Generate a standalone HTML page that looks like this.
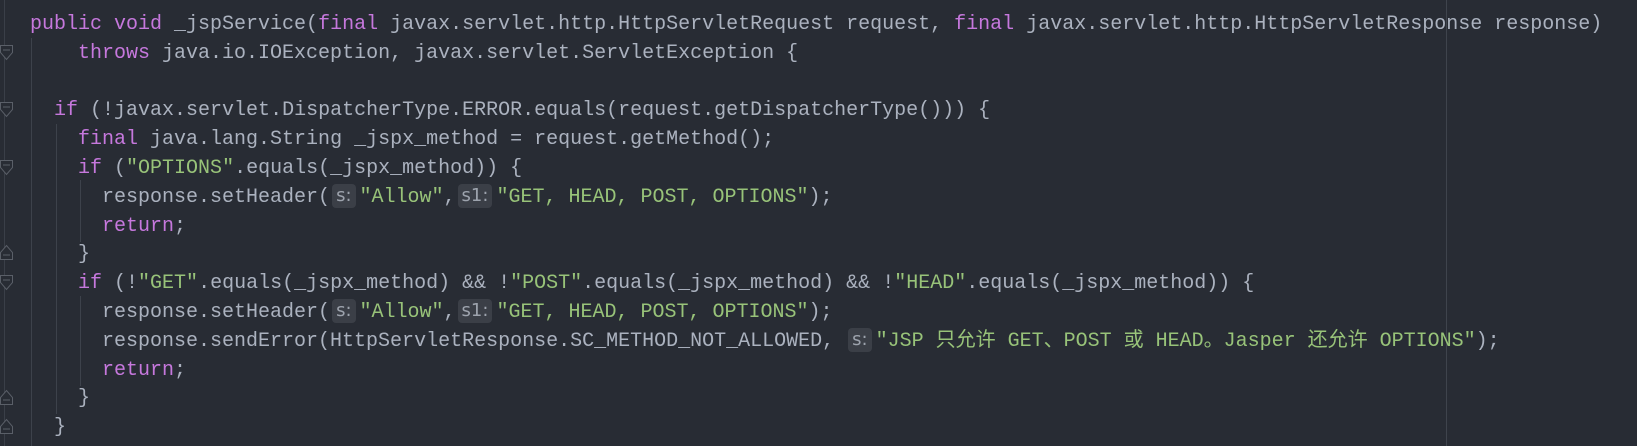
<!DOCTYPE html>
<html><head><meta charset="utf-8"><style>
html,body{margin:0;padding:0;background:#282c34;width:1637px;height:446px;overflow:hidden;position:relative}
.code{position:absolute;left:30px;top:11px;font-family:"Liberation Mono","Noto Sans CJK SC",monospace;font-size:20px;line-height:28.8px;color:#abb2bf;white-space:pre}
.k{color:#c678dd}.s{color:#98c379}
.h{display:inline-block;background:#3b3f47;color:#9da3ad;border-radius:4px;font-family:"DejaVu Sans",sans-serif;font-size:18px;line-height:24px;padding:0 4px;margin:0 4px 0 2px;vertical-align:1px}
.g{position:absolute;width:1px;background:#3d424b}
svg.f{position:absolute;left:0}
</style></head><body>
<div class="g" style="left:4px;top:0;height:446px;background:#3a3f48"></div>
<div class="g" style="left:31px;top:38px;height:408px"></div>
<div class="g" style="left:56px;top:124px;height:290px"></div>
<div class="g" style="left:80px;top:180px;height:62px"></div>
<div class="g" style="left:80px;top:296px;height:90px"></div>
<div class="g" style="left:1446px;top:0;height:446px;background:#3f444d"></div>
<svg class="f" style="top:45px" width="14" height="16"><path d="M0.5 0.5H12.5V7.5L6.5 14.5L0.5 7.5Z" fill="#282c34" stroke="#5a5f68"/><path d="M3 5H10" stroke="#5a5f68"/></svg>
<svg class="f" style="top:102px" width="14" height="16"><path d="M0.5 0.5H12.5V7.5L6.5 14.5L0.5 7.5Z" fill="#282c34" stroke="#5a5f68"/><path d="M3 5H10" stroke="#5a5f68"/></svg>
<svg class="f" style="top:160px" width="14" height="16"><path d="M0.5 0.5H12.5V7.5L6.5 14.5L0.5 7.5Z" fill="#282c34" stroke="#5a5f68"/><path d="M3 5H10" stroke="#5a5f68"/></svg>
<svg class="f" style="top:244px" width="14" height="16"><path d="M0.5 15.5H12.5V8.5L6.5 1.5L0.5 8.5Z" fill="#282c34" stroke="#5a5f68"/><path d="M3 11H10" stroke="#5a5f68"/></svg>
<svg class="f" style="top:275px" width="14" height="16"><path d="M0.5 0.5H12.5V7.5L6.5 14.5L0.5 7.5Z" fill="#282c34" stroke="#5a5f68"/><path d="M3 5H10" stroke="#5a5f68"/></svg>
<svg class="f" style="top:389px" width="14" height="16"><path d="M0.5 15.5H12.5V8.5L6.5 1.5L0.5 8.5Z" fill="#282c34" stroke="#5a5f68"/><path d="M3 11H10" stroke="#5a5f68"/></svg>
<svg class="f" style="top:418px" width="14" height="16"><path d="M0.5 15.5H12.5V8.5L6.5 1.5L0.5 8.5Z" fill="#282c34" stroke="#5a5f68"/><path d="M3 11H10" stroke="#5a5f68"/></svg>
<div class="code"><span class="k">public void</span> _jspService(<span class="k">final</span> javax.servlet.http.HttpServletRequest request, <span class="k">final</span> javax.servlet.http.HttpServletResponse response)
    <span class="k">throws</span> java.io.IOException, javax.servlet.ServletException {

  <span class="k">if</span> (!javax.servlet.DispatcherType.ERROR.equals(request.getDispatcherType())) {
    <span class="k">final</span> java.lang.String _jspx_method = request.getMethod();
    <span class="k">if</span> (<span class="s">"OPTIONS"</span>.equals(_jspx_method)) {
      response.setHeader(<span class="h">s:</span><span class="s">"Allow"</span>,<span class="h">s1:</span><span class="s">"GET, HEAD, POST, OPTIONS"</span>);
      <span class="k">return</span>;
    }
    <span class="k">if</span> (!<span class="s">"GET"</span>.equals(_jspx_method) &amp;&amp; !<span class="s">"POST"</span>.equals(_jspx_method) &amp;&amp; !<span class="s">"HEAD"</span>.equals(_jspx_method)) {
      response.setHeader(<span class="h">s:</span><span class="s">"Allow"</span>,<span class="h">s1:</span><span class="s">"GET, HEAD, POST, OPTIONS"</span>);
      response.sendError(HttpServletResponse.SC_METHOD_NOT_ALLOWED, <span class="h">s:</span><span class="s">"JSP 只允许 GET、POST 或 HEAD。Jasper 还允许 OPTIONS"</span>);
      <span class="k">return</span>;
    }
  }</div>
</body></html>
